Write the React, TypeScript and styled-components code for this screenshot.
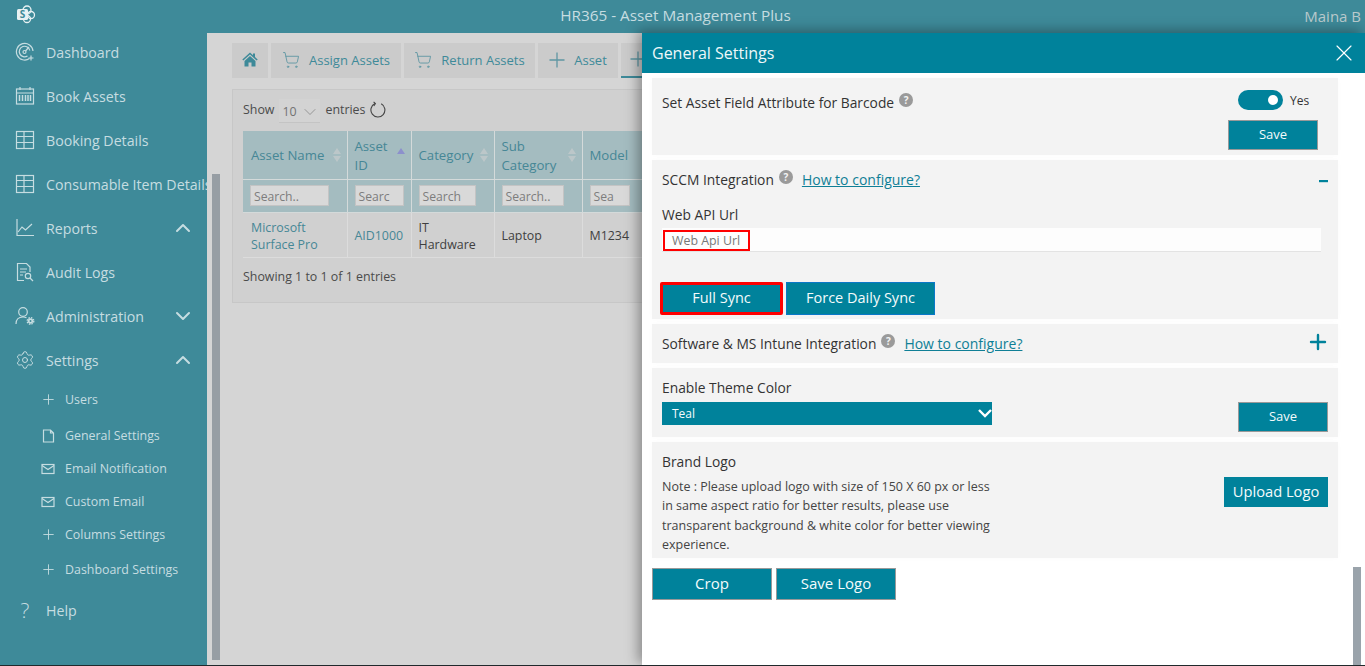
import React from "react";
import styled, { createGlobalStyle } from "styled-components";
import { ChevronDown, ChevronUp, Plus, Settings, ShoppingCart, X } from "lucide-react";

const GlobalStyle = createGlobalStyle`
  html, body {
    margin: 0;
    padding: 0;
    overflow: hidden;
  }
  * {
    box-sizing: border-box;
  }
  body {
    font-family: "Open Sans", "Noto Sans", "Liberation Sans", sans-serif;
  }
`;

const sidebarText = "#c6dde1";
const teal = "#00829b";
const dimTeal = "#3e8a99";

const Page = styled.div`
  position: relative;
  width: 1365px;
  height: 666px;
  display: flex;
  flex-direction: column;
  overflow: hidden;
  background: #d5d5d5;
  border-bottom: 1px solid #20292c;
`;

const Header = styled.header`
  height: 33px;
  flex: none;
  display: flex;
  align-items: center;
  justify-content: center;
  position: relative;
  background: ${dimTeal};
  color: ${sidebarText};
  font-size: 15.3px;
  padding: 0 14px 4px 0;
`;

const LogoMark = styled.svg`
  position: absolute;
  left: 16px;
  top: 5px;
`;

const UserName = styled.span`
  position: absolute;
  right: 4px;
  top: 6px;
  font-size: 15px;
  color: #b9c9cc;
`;

const Body = styled.div`
  flex: 1;
  display: flex;
  min-height: 0;
`;

const Sidebar = styled.nav`
  width: 207px;
  flex: none;
  background: ${dimTeal};
  color: ${sidebarText};
  overflow: hidden;
`;

const NavList = styled.div`
  margin-top: -3px;
`;

const NavRow = styled.div<{ $top?: number }>`
  height: 44px;
  width: 240px;
  margin-top: ${(p) => p.$top ?? 0}px;
  display: flex;
  align-items: center;
  font-size: 14.2px;
  white-space: nowrap;
  position: relative;
  padding-left: 46px;
`;

const NavIcon = styled.span`
  position: absolute;
  left: 15px;
  top: 12px;
  width: 20px;
  height: 20px;
  display: flex;
  align-items: center;
  justify-content: center;
`;

const NavChevron = styled.span`
  position: absolute;
  left: 171px;
  top: 10px;
  display: flex;
`;

const SubRow = styled.div<{ $top?: number }>`
  height: 33px;
  margin-top: ${(p) => p.$top ?? 0}px;
  display: flex;
  align-items: center;
  font-size: 12.4px;
  white-space: nowrap;
  position: relative;
  padding-left: 65px;
`;

const SubIcon = styled.span`
  position: absolute;
  left: 41px;
  top: 50%;
  margin-top: -7px;
  width: 14px;
  height: 14px;
  display: flex;
  align-items: center;
  justify-content: center;
`;

const HelpGlyph = styled.span`
  font-size: 21px;
  line-height: 20px;
  font-weight: 300;
`;

const ScrollStrip = styled.div`
  width: 25px;
  flex: none;
  padding: 141px 12px 5px 5px;
`;

const ScrollThumb = styled.div`
  height: 100%;
  background: #979ea4;
`;

const Content = styled.main`
  flex: 1;
  min-width: 0;
  overflow: hidden;
  padding-top: 10px;
`;

const TabBar = styled.div`
  display: flex;
  gap: 3px;
  height: 35px;
  width: 520px;
`;

const Tab = styled.div<{ $w: number; $active?: boolean }>`
  width: ${(p) => p.$w}px;
  flex: none;
  display: flex;
  align-items: center;
  justify-content: ${(p) => (p.$active ? "flex-start" : "center")};
  gap: 9px;
  background: #cbcbcb;
  color: ${dimTeal};
  font-size: 13px;
  white-space: nowrap;
  padding: 0 0 2px ${(p) => (p.$active ? 9 : 0)}px;
  border-bottom: ${(p) => (p.$active ? `2px solid ${dimTeal}` : "none")};
`;

const TabIcon = styled.span`
  display: flex;
  color: #5f96a3;
`;

const Card = styled.section`
  margin-top: 11px;
  width: 600px;
  height: 214px;
  background: #d0d0d0;
  border: 1px solid #c7c7c7;
  padding: 0 10px;
  overflow: hidden;
`;

const LengthRow = styled.div`
  height: 41px;
  display: flex;
  align-items: center;
  font-size: 12.4px;
  color: #4b4b4b;
  gap: 5px;
  padding-bottom: 2px;
`;

const LengthSelect = styled.div`
  width: 41px;
  height: 24px;
  background: #d3d3d3;
  border-bottom: 1px solid #c4c4c4;
  display: flex;
  align-items: center;
  justify-content: space-between;
  padding: 2px 0 0 3px;
  color: #727272;
  font-size: 12.4px;
  margin-top: 3px;
`;

const DataTable = styled.table`
  border-collapse: collapse;
  table-layout: fixed;
  width: 600px;
  font-size: 12.4px;
`;

const HeadCell = styled.th<{ $w: number }>`
  width: ${(p) => p.$w}px;
  height: 48px;
  background: #a4bcc0;
  color: #468796;
  font-weight: 400;
  font-size: 13.2px;
  line-height: 19px;
  text-align: left;
  padding: 2px 20px 0 7px;
  border-right: 1px solid #d4dada;
  border-bottom: 1px solid #d4dada;
  position: relative;
  &:first-child {
    padding-left: 8px;
  }
`;

const SortIcon = styled.svg`
  position: absolute;
  right: 5px;
  top: 50%;
  margin-top: -8px;
`;

const FilterCell = styled.td`
  height: 33px;
  background: #a4bcc0;
  padding: 0 0 0 7px;
  border-right: 1px solid #d4dada;
  border-bottom: 1px solid #d4dada;
`;

const FilterInput = styled.div<{ $w: number }>`
  width: ${(p) => p.$w}px;
  height: 21px;
  background: #d9d9d9;
  border: 1px solid #c4c4c4;
  color: #7d7d7d;
  font-size: 12.2px;
  padding-left: 3px;
  line-height: 21px;
  overflow: hidden;
  white-space: nowrap;
`;

const DataCell = styled.td<{ $link?: boolean }>`
  height: 45px;
  padding: 2px 7px 0;
  line-height: 17px;
  color: ${(p) => (p.$link ? "#468796" : "#3f3f3f")};
  border-right: 1px solid #dcdcdc;
  border-bottom: 1px solid #dcdcdc;
  &:first-child {
    padding-left: 8px;
  }
`;

const InfoLine = styled.div`
  margin-top: 10px;
  font-size: 12.4px;
  color: #4b4b4b;
`;

const Drawer = styled.aside`
  position: absolute;
  top: 33px;
  right: 0;
  bottom: 0;
  width: 723px;
  background: #fff;
  box-shadow: -4px -2px 12px rgba(0, 0, 0, 0.35);
`;

const DrawerHead = styled.div`
  height: 40px;
  background: ${teal};
  color: #eef7f9;
  font-size: 16px;
  padding: 0 7px 0 10px;
  display: flex;
  align-items: center;
  justify-content: space-between;
`;

const DrawerBody = styled.div`
  padding: 5px 27px 0 10px;
  display: flex;
  flex-direction: column;
  gap: 5px;
`;

const Panel = styled.div<{ $h: number }>`
  height: ${(p) => p.$h}px;
  background: #f3f3f3;
  padding: 0 10px;
  box-shadow: 0 0 6px rgba(0, 0, 0, 0.02);
  overflow: hidden;
`;

const SplitPanel = styled(Panel)`
  display: flex;
  justify-content: space-between;
`;

const PanelTitle = styled.div`
  display: flex;
  align-items: center;
  font-size: 13.8px;
  font-weight: 500;
  color: #333;
  white-space: nowrap;
`;

const BarcodeTitle = styled(PanelTitle)`
  margin-top: 14px;
  height: 20px;
`;

const RowHead = styled.div<{ $top: number }>`
  display: flex;
  align-items: center;
  justify-content: space-between;
  height: 20px;
  margin-top: ${(p) => p.$top}px;
`;

const HelpBadge = styled.span`
  width: 14px;
  height: 14px;
  margin: -4px 0 0 5px;
  border-radius: 50%;
  background: #9a9a9a;
  color: #f3f3f3;
  font-size: 10px;
  font-weight: 700;
  line-height: 14px;
  text-align: center;
  flex: none;
`;

const ConfigLink = styled.a`
  margin-left: 9px;
  color: #0f7f96;
  font-size: 14px;
  font-weight: 500;
  text-decoration: underline;
`;

const ToggleColumn = styled.div`
  width: 110px;
  display: flex;
  flex-direction: column;
  align-items: flex-end;
  margin-right: 10px;
  padding-top: 12px;
`;

const ToggleRow = styled.div`
  width: 100px;
  display: flex;
  align-items: center;
  gap: 7px;
  font-size: 12px;
  color: #333;
  margin-bottom: 10px;
  padding-left: 20px;
`;

const Toggle = styled.span`
  width: 45px;
  height: 20px;
  border-radius: 10px;
  background: ${teal};
  position: relative;
  flex: none;
  &::after {
    content: "";
    position: absolute;
    right: 5px;
    top: 5px;
    width: 10px;
    height: 10px;
    border-radius: 50%;
    background: #fff;
  }
`;

const ActionButton = styled.div<{ $w: number; $h?: number; $edge?: string; $size?: number }>`
  width: ${(p) => p.$w}px;
  height: ${(p) => p.$h ?? 30}px;
  flex: none;
  background: ${teal};
  color: #f4fbfc;
  font-size: ${(p) => p.$size ?? 13}px;
  display: flex;
  align-items: center;
  justify-content: center;
  padding-bottom: 2px;
  border: 1px solid ${(p) => p.$edge ?? "#999"};
  white-space: nowrap;
`;

const FieldLabel = styled.div<{ $top: number }>`
  margin-top: ${(p) => p.$top}px;
  font-size: 13.8px;
  font-weight: 500;
  color: #333;
  line-height: 18px;
`;

const ApiField = styled.div`
  margin-top: 4px;
  width: 659px;
  height: 24px;
  background: #fdfdfd;
  border-bottom: 1px solid #e3e3e3;
  padding: 2px 0 0 1px;
`;

const ApiPlaceholder = styled.span`
  display: block;
  width: 87px;
  height: 21px;
  border: 2px solid #ff0000;
  padding-left: 7px;
  font-size: 12.4px;
  line-height: 17px;
  color: #777;
  white-space: nowrap;
`;

const SyncRow = styled.div`
  display: flex;
  gap: 3px;
  margin: 30px 0 0 -2px;
`;

const RedOutline = styled.div`
  border: 3px solid #ff0000;
  border-radius: 2px;
  width: 123px;
  height: 33px;
  background: ${teal};
  color: #f4fbfc;
  font-size: 14.5px;
  display: flex;
  align-items: center;
  justify-content: center;
  padding-bottom: 2px;
`;

const ThemeSelect = styled.div`
  width: 330px;
  height: 23px;
  margin-top: 5px;
  background: ${teal};
  color: #f4fbfc;
  font-size: 12px;
  display: flex;
  align-items: center;
  justify-content: space-between;
  padding: 0 0 1px 10px;
`;

const AlignedAction = styled.div<{ $top: number }>`
  padding-top: ${(p) => p.$top}px;
`;

const NoteText = styled.p`
  width: 340px;
  margin: 6px 0 0;
  font-size: 12.5px;
  line-height: 19.4px;
  color: #444;
`;

const CropRow = styled.div`
  display: flex;
  gap: 4px;
  margin-top: 5px;
`;

const DrawerThumb = styled.div`
  position: absolute;
  right: 4px;
  bottom: 0;
  width: 8px;
  height: 98px;
  background: #9aa3ab;
`;

const MinusMark = styled.svg`
  margin-top: 4px;
`;

const PlusMark = styled(Plus)`
  margin: 0 -2px 2px 0;
`;

const Line = ({ children }: { children: React.ReactNode }) => (
  <svg width="20" height="20" viewBox="0 0 20 20" fill="none" stroke={sidebarText} strokeWidth="1.2">
    {children}
  </svg>
);

const GaugeIcon = () => (
  <Line>
    <path d="M14.5 16.5A8.3 8.3 0 1 1 18 9" />
    <path d="M12.5 14A5.3 5.3 0 1 1 14.8 8.5" />
    <circle cx="9.5" cy="10" r="1.5" />
    <path d="M10.5 9 14 5M16 13.5v5M13.5 16h5" />
  </Line>
);

const CalendarIcon = () => (
  <Line>
    <rect x="1.5" y="3" width="17" height="15" />
    <path d="M1.5 7h17M5 1v3M15 1v3" />
    <path d="M4.5 9v6M7.5 9v6M10.5 9v6M13 9v6M15.5 9v6" strokeWidth="1.5" />
  </Line>
);

const TableIcon = () => (
  <Line>
    <rect x="1.5" y="1.5" width="17" height="17" />
    <path d="M1.5 6.5h17M1.5 12.5h17M9 1.5v17" />
  </Line>
);

const ChartIcon = () => (
  <Line>
    <path d="M2 1v16.5h17" />
    <path d="M3 14l4-5 3.5 3L17 6" />
  </Line>
);

const AuditIcon = () => (
  <Line>
    <path d="M9 18.5H2.5v-17h9l3.5 3.5v5" />
    <path d="M5 7h7M5 10h6M5 13h3" />
    <circle cx="13" cy="14" r="2.7" />
    <path d="M15 16l3 3" />
  </Line>
);

const AdminIcon = () => (
  <Line>
    <circle cx="8" cy="6" r="4.3" />
    <path d="M1 18c0-4.5 2.5-7 7-7 1.5 0 2.5.3 3.5.8" />
    <circle cx="15.5" cy="15" r="1.8" strokeWidth="1.7" />
    <circle cx="15.5" cy="15" r="3.3" strokeWidth="1.3" strokeDasharray="1.5 1.1" />
  </Line>
);

const FileIcon = () => (
  <svg width="13" height="14" viewBox="0 0 13 14" fill="none" stroke={sidebarText} strokeWidth="1.2">
    <path d="M1.5 1h7l3 3v9h-10zM8.5 1v3h3" />
  </svg>
);

const MailIcon = () => (
  <svg width="14" height="12" viewBox="0 0 14 12" fill="none" stroke={sidebarText} strokeWidth="1.2">
    <rect x="1" y="1.5" width="12" height="9" />
    <path d="M1 2.5l6 4 6-4" />
  </svg>
);

const ThinPlus = ({ size = 16 }: { size?: number }) => (
  <svg width={size} height={size} viewBox="0 0 16 16" fill="none" stroke="currentColor" strokeWidth="1.3">
    <path d="M8 0.5v15M0.5 8h15" />
  </svg>
);

const HomeIcon = () => (
  <svg width="16" height="15" viewBox="0 0 16 15" fill={dimTeal}>
    <path d="M8 0.5 0.3 7.6l1 1L8 2.6l6.7 6 1-1L13 5.1V1.5h-2v1.8z" />
    <path d="M8 4 2.5 9v5.5h4v-4h3v4h4V9z" />
  </svg>
);

const RefreshIcon = () => (
  <svg width="16" height="17" viewBox="0 0 16 17" fill="none" stroke="#444" strokeWidth="1.1">
    <path d="M11.2 2.8A7 7 0 1 1 5 2.6" />
    <path d="M3.6 0.8 5.4 2.6 3.8 5" />
  </svg>
);

const Sort = ({ active }: { active?: boolean }) => (
  <SortIcon width="10" height="16" viewBox="0 0 10 16">
    <path d="M5 1l4 6H1z" fill={active ? "#8c90cc" : "#bcc7c9"} />
    {!active && <path d="M5 15l4-6H1z" fill="#bcc7c9" />}
  </SortIcon>
);

const Chevron = ({ up }: { up?: boolean }) => (
  <NavChevron>
    {up ? (
      <ChevronUp size={24} strokeWidth={2} color={sidebarText} />
    ) : (
      <ChevronDown size={24} strokeWidth={2} color={sidebarText} />
    )}
  </NavChevron>
);

const App = () => {
  return (
    <Page>
      <GlobalStyle />
      <Header>
        <LogoMark width="20" height="20" viewBox="0 0 20 20">
          <circle cx="11" cy="5" r="4" fill="none" stroke="#e8f1f3" strokeWidth="1.3" />
          <circle cx="15" cy="10" r="3.5" fill="none" stroke="#e8f1f3" strokeWidth="1.3" />
          <circle cx="11" cy="14" r="3.5" fill="none" stroke="#e8f1f3" strokeWidth="1.3" />
          <rect x="1" y="4" width="11" height="11" rx="1.5" fill="#e8f1f3" />
          <text x="6.5" y="13" fontSize="10" fontWeight="700" textAnchor="middle" fill={dimTeal}>
            S
          </text>
        </LogoMark>
        HR365 - Asset Management Plus
        <UserName>Maina B</UserName>
      </Header>
      <Body>
        <Sidebar>
          <NavList>
            <NavRow>
              <NavIcon>
                <GaugeIcon />
              </NavIcon>
              Dashboard
            </NavRow>
            <NavRow>
              <NavIcon>
                <CalendarIcon />
              </NavIcon>
              Book Assets
            </NavRow>
            <NavRow>
              <NavIcon>
                <TableIcon />
              </NavIcon>
              Booking Details
            </NavRow>
            <NavRow>
              <NavIcon>
                <TableIcon />
              </NavIcon>
              Consumable Item Details
            </NavRow>
            <NavRow>
              <NavIcon>
                <ChartIcon />
              </NavIcon>
              Reports
              <Chevron up />
            </NavRow>
            <NavRow>
              <NavIcon>
                <AuditIcon />
              </NavIcon>
              Audit Logs
            </NavRow>
            <NavRow>
              <NavIcon>
                <AdminIcon />
              </NavIcon>
              Administration
              <Chevron />
            </NavRow>
            <NavRow>
              <NavIcon>
                <Settings size={20} strokeWidth={1.2} color={sidebarText} />
              </NavIcon>
              Settings
              <Chevron up />
            </NavRow>
            <SubRow $top={1}>
              <SubIcon>
                <ThinPlus size={11} />
              </SubIcon>
              Users
            </SubRow>
            <SubRow $top={3}>
              <SubIcon>
                <FileIcon />
              </SubIcon>
              General Settings
            </SubRow>
            <SubRow>
              <SubIcon>
                <MailIcon />
              </SubIcon>
              Email Notification
            </SubRow>
            <SubRow>
              <SubIcon>
                <MailIcon />
              </SubIcon>
              Custom Email
            </SubRow>
            <SubRow>
              <SubIcon>
                <ThinPlus size={11} />
              </SubIcon>
              Columns Settings
            </SubRow>
            <SubRow $top={2}>
              <SubIcon>
                <ThinPlus size={11} />
              </SubIcon>
              Dashboard Settings
            </SubRow>
            <NavRow $top={2}>
              <NavIcon>
                <HelpGlyph>?</HelpGlyph>
              </NavIcon>
              Help
            </NavRow>
          </NavList>
        </Sidebar>
        <ScrollStrip>
          <ScrollThumb />
        </ScrollStrip>
        <Content>
          <TabBar>
            <Tab $w={36}>
              <HomeIcon />
            </Tab>
            <Tab $w={130}>
              <TabIcon>
                <ShoppingCart size={18} strokeWidth={1.2} />
              </TabIcon>
              Assign Assets
            </Tab>
            <Tab $w={131}>
              <TabIcon>
                <ShoppingCart size={18} strokeWidth={1.2} />
              </TabIcon>
              Return Assets
            </Tab>
            <Tab $w={80}>
              <TabIcon>
                <ThinPlus />
              </TabIcon>
              Asset
            </Tab>
            <Tab $w={60} $active>
              <TabIcon>
                <ThinPlus />
              </TabIcon>
            </Tab>
          </TabBar>
          <Card>
            <LengthRow>
              Show
              <LengthSelect>
                10
                <ChevronDown size={20} strokeWidth={0.8} color="#777" />
              </LengthSelect>
              entries
              <RefreshIcon />
            </LengthRow>
            <DataTable>
              <thead>
                <tr>
                  <HeadCell $w={104}>
                    Asset Name
                    <Sort />
                  </HeadCell>
                  <HeadCell $w={64}>
                    Asset ID
                    <Sort active />
                  </HeadCell>
                  <HeadCell $w={83}>
                    Category
                    <Sort />
                  </HeadCell>
                  <HeadCell $w={88}>
                    Sub Category
                    <Sort />
                  </HeadCell>
                  <HeadCell $w={261}>
                    Model
                    <Sort />
                  </HeadCell>
                </tr>
                <tr>
                  <FilterCell>
                    <FilterInput $w={79}>Search..</FilterInput>
                  </FilterCell>
                  <FilterCell>
                    <FilterInput $w={49}>Searc</FilterInput>
                  </FilterCell>
                  <FilterCell>
                    <FilterInput $w={57}>Search</FilterInput>
                  </FilterCell>
                  <FilterCell>
                    <FilterInput $w={62}>Search..</FilterInput>
                  </FilterCell>
                  <FilterCell>
                    <FilterInput $w={40}>Sea</FilterInput>
                  </FilterCell>
                </tr>
              </thead>
              <tbody>
                <tr>
                  <DataCell $link>Microsoft Surface Pro</DataCell>
                  <DataCell $link>AID1000</DataCell>
                  <DataCell>IT Hardware</DataCell>
                  <DataCell>Laptop</DataCell>
                  <DataCell>M1234</DataCell>
                </tr>
              </tbody>
            </DataTable>
            <InfoLine>Showing 1 to 1 of 1 entries</InfoLine>
          </Card>
        </Content>
      </Body>
      <Drawer>
        <DrawerHead>
          General Settings
          <X size={28} strokeWidth={1} color="#fff" />
        </DrawerHead>
        <DrawerBody>
          <SplitPanel $h={77}>
            <BarcodeTitle>
              Set Asset Field Attribute for Barcode
              <HelpBadge>?</HelpBadge>
            </BarcodeTitle>
            <ToggleColumn>
              <ToggleRow>
                <Toggle />
                Yes
              </ToggleRow>
              <ActionButton $w={90}>Save</ActionButton>
            </ToggleColumn>
          </SplitPanel>
          <Panel $h={159}>
            <RowHead $top={9}>
              <PanelTitle>
                SCCM Integration
                <HelpBadge>?</HelpBadge>
                <ConfigLink>How to configure?</ConfigLink>
              </PanelTitle>
              <MinusMark width="10" height="12" viewBox="0 0 10 12">
                <rect x="1" y="5" width="9" height="2.2" fill={teal} />
              </MinusMark>
            </RowHead>
            <FieldLabel $top={17}>Web API Url</FieldLabel>
            <ApiField>
              <ApiPlaceholder>Web Api Url</ApiPlaceholder>
            </ApiField>
            <SyncRow>
              <RedOutline>Full Sync</RedOutline>
              <ActionButton $w={149} $h={33} $edge="#0a78c8" $size={14.5}>
                Force Daily Sync
              </ActionButton>
            </SyncRow>
          </Panel>
          <Panel $h={39}>
            <RowHead $top={9}>
              <PanelTitle>
                Software &amp; MS Intune Integration
                <HelpBadge>?</HelpBadge>
                <ConfigLink>How to configure?</ConfigLink>
              </PanelTitle>
              <PlusMark size={24} strokeWidth={2.4} color={teal} />
            </RowHead>
          </Panel>
          <SplitPanel $h={69}>
            <div>
              <FieldLabel $top={11}>Enable Theme Color</FieldLabel>
              <ThemeSelect>
                Teal
                <svg width="14" height="10" viewBox="0 0 14 10" fill="none" stroke="#fff" strokeWidth="2.4">
                  <path d="M1 2l6 6 6-6" />
                </svg>
              </ThemeSelect>
            </div>
            <AlignedAction $top={34}>
              <ActionButton $w={90}>Save</ActionButton>
            </AlignedAction>
          </SplitPanel>
          <SplitPanel $h={116}>
            <div>
              <FieldLabel $top={11}>Brand Logo</FieldLabel>
              <NoteText>
                Note : Please upload logo with size of 150 X 60 px or less in same aspect ratio for better results,
                please use transparent background &amp; white color for better viewing experience.
              </NoteText>
            </div>
            <AlignedAction $top={35}>
              <ActionButton $w={104} $edge={teal} $size={14.7}>
                Upload Logo
              </ActionButton>
            </AlignedAction>
          </SplitPanel>
          <CropRow>
            <ActionButton $w={120} $h={32} $size={15}>
              Crop
            </ActionButton>
            <ActionButton $w={120} $h={32} $size={15}>
              Save Logo
            </ActionButton>
          </CropRow>
        </DrawerBody>
        <DrawerThumb />
      </Drawer>
    </Page>
  );
};

export default App;
